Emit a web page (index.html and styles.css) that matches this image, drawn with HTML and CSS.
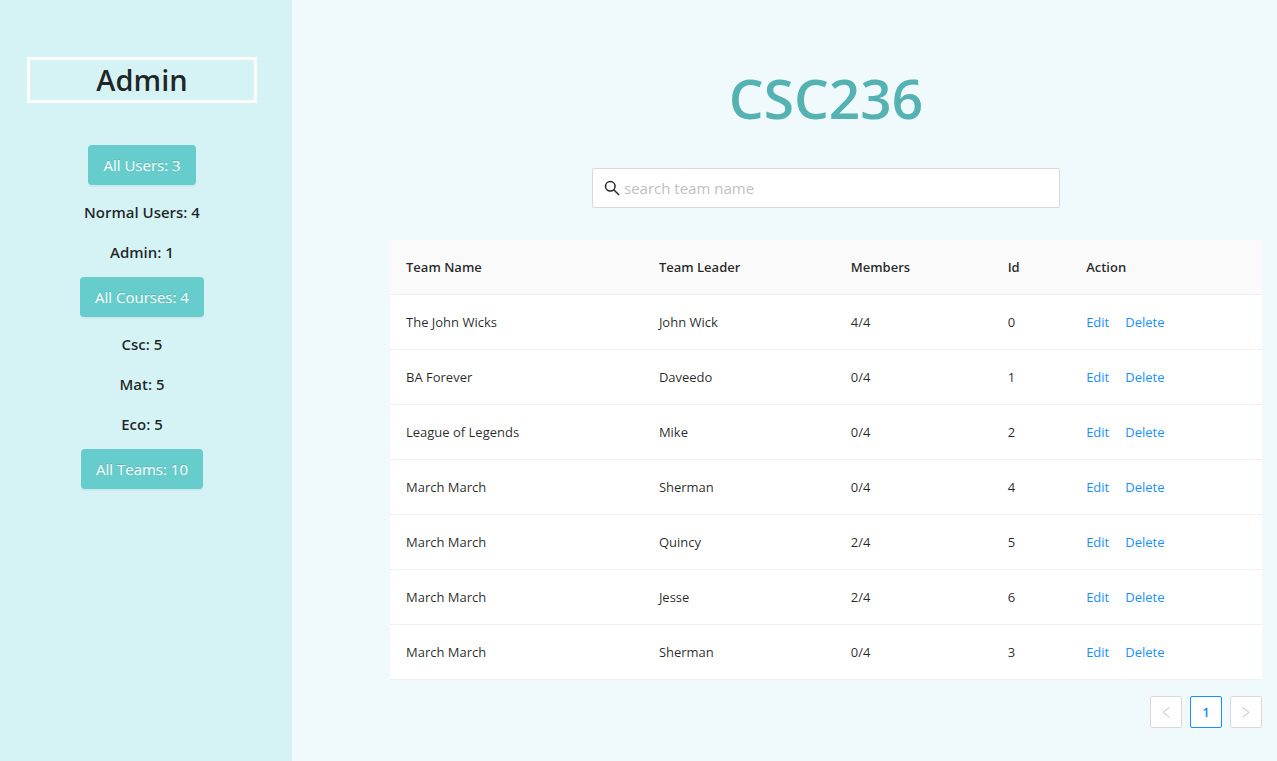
FILE: index.html
```html
<!DOCTYPE html>
<html lang="en">
<head>
<meta charset="utf-8">
<title>CSC236</title>
<link rel="stylesheet" href="styles.css">
</head>
<body>
<div class="layout">
  <aside class="sidebar">
    <h2 class="role">Admin</h2>
    <button class="stat-button" type="button">All Users: 3</button>
    <ul class="stat-list">
      <li>Normal Users: 4</li>
      <li>Admin: 1</li>
    </ul>
    <button class="stat-button" type="button">All Courses: 4</button>
    <ul class="stat-list">
      <li>Csc: 5</li>
      <li>Mat: 5</li>
      <li>Eco: 5</li>
    </ul>
    <button class="stat-button" type="button">All Teams: 10</button>
  </aside>
  <main class="content">
    <h1 class="title">CSC236</h1>
    <label class="search">
      <svg class="search-icon" viewBox="0 0 16 16" aria-hidden="true"><circle cx="6.3" cy="6.3" r="4.8"/><path d="M9.8 9.8L15 15"/></svg>
      <input class="search-input" type="text" placeholder="search team name" aria-label="Search team name">
    </label>
    <table class="teams">
      <colgroup><col class="col-name"><col class="col-leader"><col class="col-members"><col class="col-id"><col class="col-action"></colgroup>
      <thead>
        <tr><th>Team Name</th><th>Team Leader</th><th>Members</th><th>Id</th><th>Action</th></tr>
      </thead>
      <tbody>
        <tr><td>The John Wicks</td><td>John Wick</td><td>4/4</td><td>0</td><td><div class="actions"><a href="#">Edit</a><a href="#">Delete</a></div></td></tr>
        <tr><td>BA Forever</td><td>Daveedo</td><td>0/4</td><td>1</td><td><div class="actions"><a href="#">Edit</a><a href="#">Delete</a></div></td></tr>
        <tr><td>League of Legends</td><td>Mike</td><td>0/4</td><td>2</td><td><div class="actions"><a href="#">Edit</a><a href="#">Delete</a></div></td></tr>
        <tr><td>March March</td><td>Sherman</td><td>0/4</td><td>4</td><td><div class="actions"><a href="#">Edit</a><a href="#">Delete</a></div></td></tr>
        <tr><td>March March</td><td>Quincy</td><td>2/4</td><td>5</td><td><div class="actions"><a href="#">Edit</a><a href="#">Delete</a></div></td></tr>
        <tr><td>March March</td><td>Jesse</td><td>2/4</td><td>6</td><td><div class="actions"><a href="#">Edit</a><a href="#">Delete</a></div></td></tr>
        <tr><td>March March</td><td>Sherman</td><td>0/4</td><td>3</td><td><div class="actions"><a href="#">Edit</a><a href="#">Delete</a></div></td></tr>
      </tbody>
    </table>
    <nav class="pagination" aria-label="Pages">
      <button class="page" type="button" disabled aria-label="Previous page"><svg class="arrow" viewBox="0 0 12 12" aria-hidden="true"><path d="M9.300 1.500L3 6.300l6.300 4.800"/></svg></button>
      <button class="page page-current" type="button" aria-current="page">1</button>
      <button class="page" type="button" disabled aria-label="Next page"><svg class="arrow" viewBox="0 0 12 12" aria-hidden="true"><path d="M2.700 1.500L9 6.300l-6.300 4.800"/></svg></button>
    </nav>
  </main>
</div>
</body>
</html>
```
FILE: styles.css
```css
* {
  box-sizing: border-box;
}

body {
  margin: 0;
  background: #f0f9fb;
  color: rgba(0, 0, 0, 0.85);
  font-family: "Open Sans", "Noto Sans", sans-serif;
  font-size: 13px;
  line-height: 22px;
}

button,
input {
  font: inherit;
}

.layout {
  display: flex;
  min-height: 100vh;
}

.sidebar {
  flex: 0 0 292px;
  display: flex;
  flex-direction: column;
  align-items: center;
  padding: 57px 35px 24px 27px;
  background: #d5f3f5;
}

.role {
  align-self: stretch;
  margin: 0 0 42px;
  border: 3px solid #fff;
  font-size: 29px;
  font-weight: 600;
  line-height: 40px;
  text-align: center;
}

.stat-button {
  height: 40px;
  padding: 0 15px;
  border: 0;
  border-radius: 4px;
  background: #66cccc;
  color: #fff;
  font-size: 15px;
  text-shadow: 0 -1px 0 rgba(0, 0, 0, 0.12);
  box-shadow: 0 2px 0 rgba(0, 0, 0, 0.045);
}

.stat-list {
  margin: 7px 0 5px;
  padding: 0;
  list-style: none;
  font-size: 15px;
  font-weight: 600;
  line-height: 40px;
  text-align: center;
}

.content {
  flex: 1;
  min-width: 0;
  padding: 64px 15px 24px 98px;
}

.title {
  margin: 0 0 36px;
  color: #54b2b2;
  font-size: 55px;
  font-weight: 600;
  line-height: 68px;
  text-align: center;
}

.search {
  display: flex;
  align-items: center;
  gap: 4px;
  width: 468px;
  max-width: 100%;
  height: 40px;
  margin: 0 auto 32px;
  padding: 0 11px;
  border: 1px solid #d9d9d9;
  border-radius: 2px;
  background: #fff;
}

.search-icon {
  width: 16px;
  height: 16px;
  fill: none;
  stroke: #262626;
  stroke-width: 1.5;
}

.search-input {
  flex: 1;
  min-width: 0;
  padding: 0;
  border: 0;
  outline: 0;
  background: transparent;
  font-size: 15px;
}

.search-input::placeholder {
  color: #bfbfbf;
  opacity: 1;
}

.teams {
  width: 100%;
  border-spacing: 0;
  table-layout: fixed;
  background: #fff;
  text-align: left;
}

.col-name {
  width: 29%;
}

.col-leader {
  width: 22%;
}

.col-members {
  width: 18%;
}

.col-id {
  width: 9%;
}

.col-action {
  width: 22%;
}

.teams th,
.teams td {
  padding: 16px;
  border-bottom: 1px solid #f0f0f0;
}

.teams th {
  background: #fafafa;
  font-weight: 600;
}

.actions {
  display: flex;
  gap: 16px;
}

.actions a {
  color: #1890ff;
  text-decoration: none;
}

.pagination {
  display: flex;
  justify-content: flex-end;
  gap: 8px;
  margin-top: 16px;
}

.page {
  display: flex;
  align-items: center;
  justify-content: center;
  width: 32px;
  height: 32px;
  padding: 0;
  border: 1px solid #d9d9d9;
  border-radius: 2px;
  background: #fff;
}

.page-current {
  border-color: #1890ff;
  color: #1890ff;
  font-weight: 600;
}

.arrow {
  width: 12px;
  height: 12px;
  fill: none;
  stroke: #bfbfbf;
}
```
